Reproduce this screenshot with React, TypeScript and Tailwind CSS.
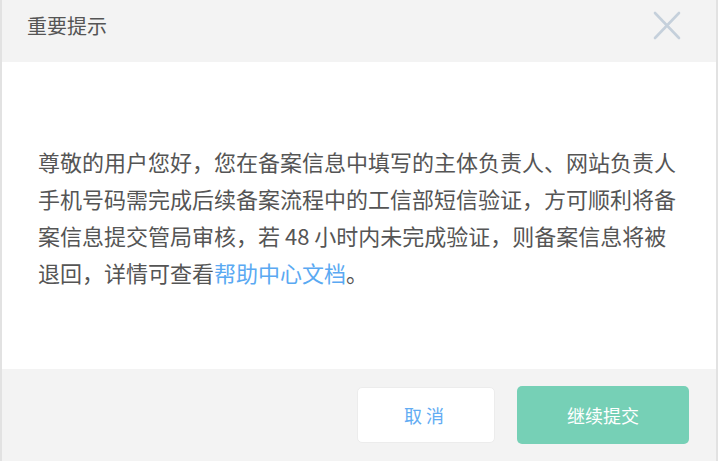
const font = { fontFamily: '"Noto Sans CJK SC", "Noto Sans", sans-serif' }

function CloseIcon() {
  return (
    <svg width="28" height="29" viewBox="0 0 28 29" fill="none" stroke="#c5d0db" strokeWidth="2.6" strokeLinecap="round">
      <path d="M2 2L26 27M26 2L2 27" />
    </svg>
  )
}

export default function App() {
  return (
    <div className="flex h-[461px] w-[720px] bg-white" style={font}>
      <div className="flex h-full w-[718px] flex-col border-x-2 border-[#e2e2e2]">
        <header className="flex h-[62px] shrink-0 items-center justify-between bg-[#f3f3f3] pb-[11px] pl-[25px] pr-[35px]">
          <h1 className="text-[20px] leading-none text-[#555]">重要提示</h1>
          <CloseIcon />
        </header>
        <main className="flex-1 pl-[36px] pr-[30px] pt-[81px]">
          <p className="text-[22px] leading-[37px] text-[#555]">
            尊敬的用户您好，您在备案信息中填写的主体负责人、网站负责人手机号码需完成后续备案流程中的工信部短信验证，方可顺利将备案信息提交管局审核，若 48 小时内未完成验证，则备案信息将被退回，详情可查看
            <a className="text-[#5aa9f2]">帮助中心文档</a>。
          </p>
        </main>
        <footer className="flex h-[92px] shrink-0 items-center justify-end gap-[22px] bg-[#f3f3f3] pr-[27px]">
          <button className="h-[56px] w-[138px] rounded-[5px] border border-[#ececec] bg-white text-[18px] tracking-[4px] text-[#62acf3]">
            取消
          </button>
          <button className="h-[58px] w-[172px] rounded-[5px] bg-[#76d0b6] text-[18px] text-white">继续提交</button>
        </footer>
      </div>
    </div>
  )
}
